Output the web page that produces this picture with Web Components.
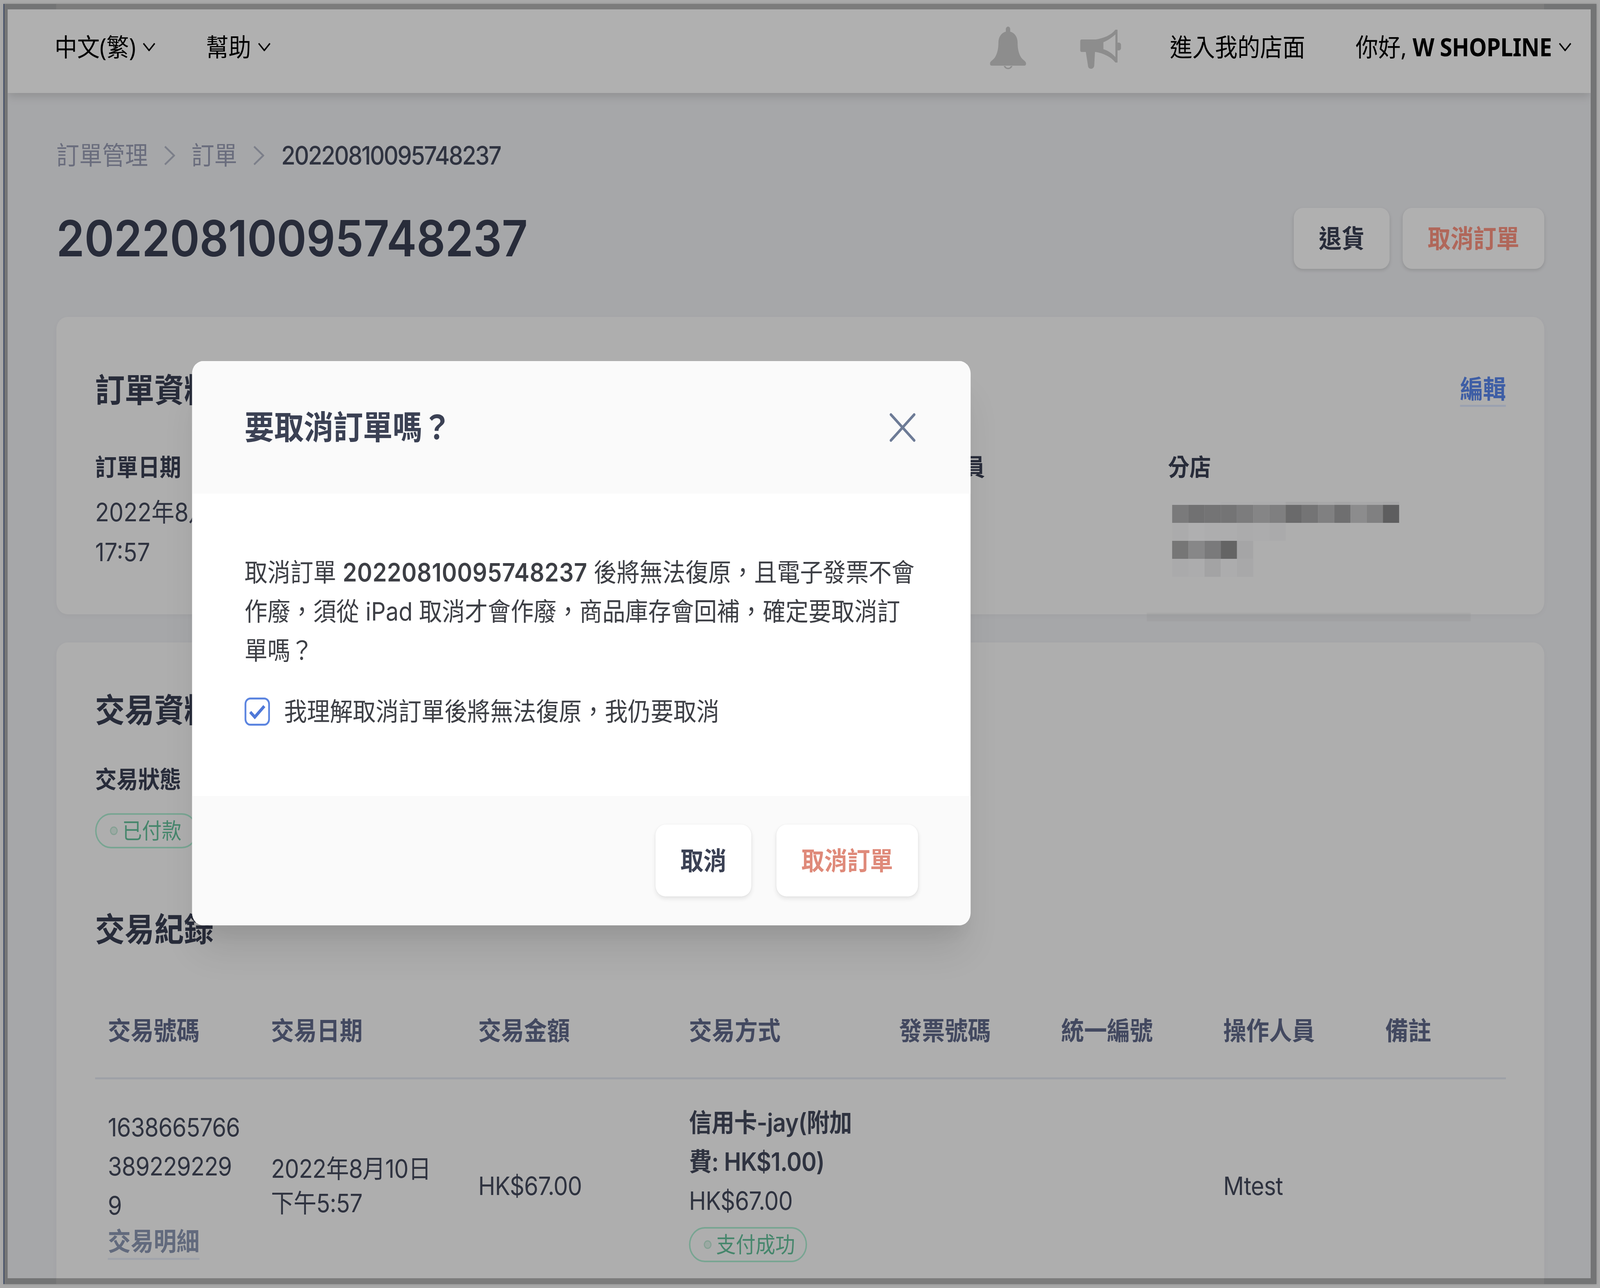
<!DOCTYPE html>
<html lang="zh-Hant">
<head>
<meta charset="utf-8">
<title>訂單</title>
<style>
  html { overflow: hidden; background: #a9a9a9; }
  html, body { margin: 0; padding: 0; }
  body { height: 3296px; overflow: hidden; font: 400 65px/100px Inter, "Noto Sans CJK TC", sans-serif; color: #444a5d; }
</style>
</head>
<body>
<app-frame>
  <top-nav></top-nav>
  <page-head title="20220810095748237">
    <plain-btn>退貨</plain-btn>
    <plain-btn tone="danger">取消訂單</plain-btn>
  </page-head>

  <order-card height="761">
    <card-heading>訂單資料<edit-link slot="action">編輯</edit-link></card-heading>
    <field-grid>
      <info-field label="訂單日期">2022年8月10日<br>17:57</info-field>
      <span></span>
      <info-field label="操作人員"></info-field>
      <info-field label="分店"><pixel-mosaic></pixel-mosaic></info-field>
    </field-grid>
    <smudge-band></smudge-band>
  </order-card>

  <order-card height="1700" gap="72">
    <card-heading top="124">交易資料</card-heading>
    <info-field label="交易狀態" style="margin-top:87px"><status-pill style="margin-top:22px">已付款</status-pill></info-field>
    <card-heading top="158">交易紀錄</card-heading>
    <tx-table></tx-table>
  </order-card>

  <confirm-dialog slot="top">
    <span slot="title">要取消訂單嗎？</span>
    <div>取消訂單 <b>20220810095748237</b> 後將無法復原，且電子發票不會</div>
    <div>作廢，須從 iPad 取消才會作廢，商品庫存會回補，確定要取消訂</div>
    <div>單嗎？</div>
    <span slot="check">我理解取消訂單後將無法復原，我仍要取消</span>
    <plain-btn slot="actions" flat>取消</plain-btn>
    <plain-btn slot="actions" tone="coral" flat>取消訂單</plain-btn>
  </confirm-dialog>
</app-frame>

<script>
// helper: every component is a class with an open shadow root
const define = (name, css, html) => customElements.define(name, class extends HTMLElement {
  constructor() {
    super();
    this.attachShadow({ mode: 'open' }).innerHTML = `<style>${css}</style>${html}`;
  }
});

const chevron = `<svg width="36" height="22" viewBox="0 0 36 22" fill="none" stroke="currentColor" stroke-width="4"><path d="M2 2l16 18L34 2"/></svg>`;
const crumbArrow = `<svg width="32" height="50" viewBox="0 0 32 50" fill="none" stroke="#b4b9c8" stroke-width="5"><path d="M3 2l26 23L3 48"/></svg>`;

define('app-frame', `
  :host { display: block; margin: 10px; width: 4520px; height: 3276px; box-sizing: border-box;
    border-left: 2px solid #1e2f55; padding: 14px 17px 15px 10px;
    background: linear-gradient(90deg, #737475 148px, #7c7c7c 148px, #7c7c7c 4370px, #737475 4370px);
    box-shadow: 0 0 6px rgba(0,0,0,.18); }
  .screen { position: relative; height: 100%; overflow: hidden; background: #f1f2f5; }
  .overlay { position: absolute; inset: 0; background: rgba(0,0,0,.31); }
  .page { padding: 0 131px 0 138px; }
  ::slotted(top-nav) { margin: 0 -131px 0 -138px; }
  ::slotted(confirm-dialog) { position: absolute; left: 523px; top: 900px; }
`, `<div class="screen"><div class="page"><slot></slot></div><div class="overlay"></div><slot name="top"></slot></div>`);

define('top-nav', `
  :host { display: flex; align-items: center; height: 214px; box-sizing: border-box; padding: 0 54px 22px 133px;
    background: #fff; color: #000; box-shadow: 0 6px 26px rgba(0,0,0,.16); font-size: 64px;
    font-family: "Noto Sans", "Noto Sans CJK TC", sans-serif; position: relative; }
  .item { display: flex; align-items: center; gap: 20px; white-space: pre; }
  .lang { margin-right: 143px; }
  .right { margin-left: auto; display: flex; align-items: center; }
  .bell { margin: 0 153px 0 0; display: block; position: relative; top: 4px; }
  .horn { margin: 0 139px 0 0; display: block; position: relative; top: 6px; }
  .shop { margin-right: 143px; }
  b { font-weight: 700; letter-spacing: -.7px; }
`, `
  <div class="item lang"><span>中文(繁)</span>${chevron}</div>
  <div class="item"><span>幫助</span>${chevron}</div>
  <div class="right">
    <svg class="bell" width="103" height="112" viewBox="0 0 103 112" fill="#cdcdcd"><path d="M51.5 0c3.5 0 6 3 6 7v6c13 3 21 14 21 28 0 16 3 28 10 38 5 7 14 9 14 16 0 3-2 5-5 5H5c-3 0-5-2-5-5 0-7 9-9 14-16 7-10 10-22 10-38 0-14 8-25 21-28V7c0-4 3-7 6.5-7z"/><path d="M39 101a13 11 0 0 0 25 0h-5a8 7 0 0 1-15 0z"/></svg>
    <svg class="horn" width="116" height="100" viewBox="0 0 116 100" fill="#cdcdcd" fill-rule="evenodd"><path d="M4 25H44C66 22 88 14 100 0H106V84H100C88 70 66 60 44 57H4C2 57 0 55 0 53V29C0 27 2 25 4 25ZM66 32C78 28 90 20 100 12V70C90 60 78 53 66 50Z"/><path d="M106 33h4c3 0 6 3 6 6v8c0 3-3 6-6 6h-4z"/><path d="M16 57h26l-2 34c0 5-4 9-9 9-6 0-9-4-9-9z"/></svg>
    <div class="item shop">進入我的店面</div>
    <div class="item"><span>你好, <b>W SHOPLINE</b></span>${chevron}</div>
  </div>`);

define('page-head', `
  :host { display: block; }
  nav { display: flex; align-items: center; padding-top: 120px; height: 80px; line-height: 80px; color: #9a9fb6; }
  nav svg { margin: 0 46px 0 45px; }
  nav b { font-weight: 500; color: #444a5d; letter-spacing: -2.9px; margin-left: 2px; }
  .row { display: flex; align-items: center; justify-content: space-between; margin: 94px 0 123px; height: 156px; }
  h1 { margin: 0; font-size: 128px; line-height: 156px; font-weight: 600; color: #3b4154; letter-spacing: -.4px; }
  .acts { display: flex; gap: 37px; }
`, `
  <nav>訂單管理${crumbArrow}訂單${crumbArrow}<b id="leaf"></b></nav>
  <div class="row"><h1 id="h"></h1><div class="acts"><slot></slot></div></div>`);
customElements.whenDefined('page-head').then(() => {
  const el = document.querySelector('page-head');
  el.shadowRoot.getElementById('leaf').textContent = el.getAttribute('title');
  el.shadowRoot.getElementById('h').textContent = el.getAttribute('title');
});

define('plain-btn', `
  :host { display: inline-flex; align-items: center; justify-content: center; height: 156px; padding: 0 71px;
    background: #fff; border-radius: 26px; font-weight: 700; color: #3b4154; line-height: 1;
    box-shadow: 0 4px 10px rgba(0,0,0,.12); }
  :host([tone="danger"]) { color: #ff9583; }
  :host([tone="coral"]) { color: #df8a7a; }
  :host([flat]) { height: 184px; border-radius: 28px; box-shadow: 0 6px 12px rgba(0,0,0,.09), 0 0 4px rgba(0,0,0,.05); }
`, `<slot></slot>`);

define('order-card', `
  :host { display: block; position: relative; box-sizing: border-box; background: #fcfcfc; border-radius: 32px;
    padding: 0 109px 0 110px; box-shadow: 0 4px 14px rgba(0,0,0,.035); }
  :host([gap]) { margin-top: 72px; }
  :host([height="761"]) { height: 761px; }
  :host([height="1700"]) { height: 1700px; }
`, `<slot></slot>`);

define('card-heading', `
  :host { display: flex; justify-content: space-between; font-size: 84px; line-height: 100px; font-weight: 700;
    color: #3b4154; padding-top: 138px; }
  :host([top="124"]) { padding-top: 124px; }
  :host([top="158"]) { padding-top: 158px; }
`, `<span><slot></slot></span><slot name="action"></slot>`);

define('edit-link', `
  :host { display: block; font-size: 65px; line-height: 80px; height: 80px; margin-top: 7px; font-weight: 700;
    color: #5b88ef; border-bottom: 5px solid #dfe9ff; }
`, `<slot></slot>`);

define('field-grid', `
  :host { display: grid; grid-template-columns: 1140px 1141px 763px auto; margin-top: 107px; }
`, `<slot></slot>`);

define('info-field', `
  :host { display: block; }
  .label { font-size: 61px; line-height: 80px; font-weight: 700; color: #3b4154; }
  .value { margin-top: 24px; line-height: 102px; color: #444a5d; }
`, `<div class="label" id="l"></div><div class="value"><slot></slot></div>`);
customElements.whenDefined('info-field').then(() => {
  document.querySelectorAll('info-field').forEach(f => {
    f.shadowRoot.getElementById('l').textContent = f.getAttribute('label');
  });
});

// the blurred-out shop name: a grid of grey cells, values as seen after the dim layer
const lift = v => Math.min(255, Math.round(v / 0.69));
class PixelMosaic extends HTMLElement {
  connectedCallback() {
    const rows = [
      [174,174,174,172,172,171,171,165,165,168,165,168,168,166],
      [122,113,116,116,124,133,127,106,116,128,111,140,128,94],
      [171,175,173,173,171,172,170],
      [118,135,122,100,165],
      [170,172,163,172,168]
    ];
    const root = this.attachShadow({ mode: 'open' });
    root.innerHTML = `<style>
      :host { display: block; padding: 24px 0 0 12px; }
      .r { display: flex; height: 46px; }
      .r:first-of-type { height: 8px; }
      .r i { display: block; width: 46px; }
    </style>`;
    rows.forEach(cells => {
      const r = document.createElement('div');
      r.className = 'r';
      cells.forEach(v => {
        const c = document.createElement('i');
        c.style.background = `rgb(${lift(v)},${lift(v)},${lift(v + 1)})`;
        r.appendChild(c);
      });
      root.appendChild(r);
    });
  }
}
customElements.define('pixel-mosaic', PixelMosaic);

define('smudge-band', `
  :host { display: block; position: absolute; left: 3094px; top: 757px; width: 919px; height: 22px; background: rgba(0,0,0,.03); }
`, ``);

define('status-pill', `
  :host { display: inline-flex; align-items: center; height: 90px; box-sizing: border-box; padding: 0 42px 0 38px; gap: 13px;
    border: 4px solid #aeefd4; border-radius: 45px; font-size: 56px; line-height: 1; color: #66c29d; }
  i { display: block; width: 22px; height: 22px; border-radius: 50%; box-sizing: border-box; background: #e3f5ec; border: 3px solid #bfe8d6; }
`, `<i></i><slot></slot>`);

define('tx-table', `
  :host { display: block; margin-top: 169px; letter-spacing: -.9px; }
  .row { display: grid; grid-template-columns: 463px 588px 598px 596px 460px 460px 460px 378px; }
  .head { height: 159px; border-bottom: 5px solid #e5e9f2; font-weight: 700; color: #616b8b; line-height: 80px; letter-spacing: 0; }
  .row > div { padding-left: 36px; }
  .body { height: 546px; align-items: center; }
  .narrow { line-height: 88px; }
  .pay b { font-weight: 600; }
  .pay { margin-bottom: 18px; }
  .link { display: inline-block; line-height: 80px; font-weight: 700; color: #8e9ab5; border-bottom: 5px solid #e8ecf8; padding-bottom: 2px; margin-top: 2px; vertical-align: top; letter-spacing: 0; }
  status-pill { margin-top: 17px; display: flex; width: max-content; padding: 0 30px 0 38px; letter-spacing: 0; }
`, `
  <div class="row head">
    <div>交易號碼</div><div>交易日期</div><div>交易金額</div><div>交易方式</div>
    <div>發票號碼</div><div>統一編號</div><div>操作人員</div><div>備註</div>
  </div>
  <div class="row body">
    <div>1638665766<br>389229229<br>9<br><span class="link">交易明細</span></div>
    <div class="narrow">2022年8月10日<br>下午5:57</div>
    <div>HK$67.00</div>
    <div class="pay"><b>信用卡-jay(附加<br>費: HK$1.00)</b><br>HK$67.00<status-pill>支付成功</status-pill></div>
    <div></div><div></div>
    <div>Mtest</div><div></div>
  </div>`);

define('confirm-dialog', `
  :host { display: block; width: 2209px; height: 1444px; background: #fff; border-radius: 32px; overflow: hidden;
    color: #3d3f45; box-sizing: border-box; box-shadow: 0 80px 100px -20px rgba(0,0,0,.1), 0 40px 40px -20px rgba(0,0,0,.05); }
  .box { height: 100%; display: flex; flex-direction: column; }
  header { height: 339px; flex: none; box-sizing: border-box; padding: 0 156px 0 149px; background: #fafafa;
    display: flex; align-items: center; justify-content: space-between; font-size: 84px; font-weight: 700; color: #3b4154; }
  header svg { display: block; }
  main { flex: 1; box-sizing: border-box; padding: 152px 100px 0 149px; }
  .check { display: flex; align-items: center; gap: 40px; margin-top: 70px; line-height: 72px; }
  .check svg { flex: none; display: block; }
  footer { height: 331px; flex: none; box-sizing: border-box; background: #fafafa; padding: 73px 149px 0 0;
    display: flex; justify-content: flex-end; gap: 71px; align-items: flex-start; }
`, `
  <div class="box">
    <header><slot name="title"></slot>
      <svg width="74" height="74" viewBox="0 0 74 74" fill="none" stroke="#6d7b96" stroke-width="7" stroke-linecap="round"><path d="M4 4l66 66M70 4L4 70"/></svg>
    </header>
    <main>
      <div><slot></slot></div>
      <div class="check">
        <svg width="72" height="72" viewBox="0 0 72 72" fill="none"><rect x="2.5" y="2.5" width="67" height="67" rx="14" fill="#fff" stroke="#5c85e0" stroke-width="5"/><path d="M16 37l13 13 27-28" stroke="#4f78d8" stroke-width="8"/></svg>
        <slot name="check"></slot>
      </div>
    </main>
    <footer><slot name="actions"></slot></footer>
  </div>`);

// bold order number in the dialog text needs a touch of tracking
document.querySelector('confirm-dialog b').style.cssText = 'font-weight:600;letter-spacing:.7px';

const fit = window.innerWidth / 4540;
if (fit < 1) {
  const frame = document.querySelector('app-frame');
  frame.style.transformOrigin = '0 0';
  frame.style.transform = `scaleX(${fit})`;
  frame.style.marginLeft = `${10 * fit}px`;
  frame.style.marginRight = `${window.innerWidth - 4540}px`;
}
</script>
</body>
</html>
